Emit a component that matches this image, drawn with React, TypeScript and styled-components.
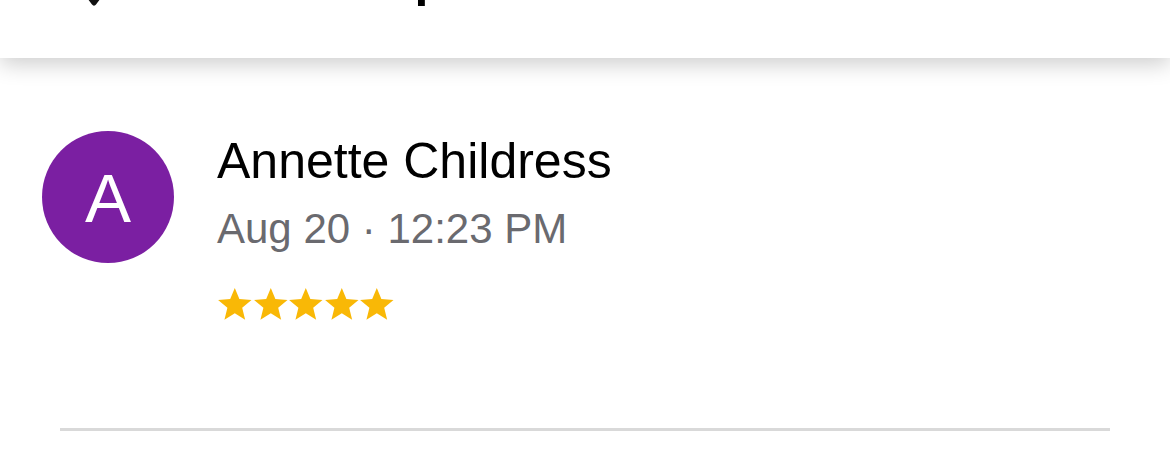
import React from "react";
import styled, { createGlobalStyle } from "styled-components";

const Global = createGlobalStyle`
  html, body { margin: 0; padding: 0; background: #ffffff; }
  body { font-family: "Liberation Sans", Arial, sans-serif; overflow: hidden; }
`;

const Page = styled.div`
  width: 1170px;
  height: 454px;
  display: flex;
  flex-direction: column;
  background: #ffffff;
`;

const Header = styled.header`
  position: relative;
  z-index: 1;
  height: 58px;
  flex: none;
  background: #ffffff;
  box-shadow: 0 6px 22px rgba(0, 0, 0, 0.2);
  overflow: hidden;
`;

const HeaderRow = styled.div`
  display: flex;
  align-items: flex-start;
  height: 60px;
  margin-top: -51px;
  padding-left: 78px;
  gap: 210px;
`;

const BackIcon = styled.svg`
  flex: none;
  margin-top: 32px;
`;

const Title = styled.div`
  font-size: 50px;
  line-height: 60px;
  font-weight: 700;
  color: #000;
  white-space: nowrap;
`;

const Content = styled.main`
  display: flex;
  flex-direction: column;
  padding-top: 73px;
`;

const Review = styled.section`
  display: flex;
  align-items: flex-start;
  gap: 43px;
  padding-left: 42px;
`;

const Avatar = styled.div<{ $color: string }>`
  width: 132px;
  height: 132px;
  flex: none;
  border-radius: 50%;
  background: ${(p) => p.$color};
  color: #ffffff;
  display: flex;
  align-items: center;
  justify-content: center;
  font-size: 69px;
  line-height: 1;
  padding-top: 2px;
  box-sizing: border-box;
`;

const Body = styled.div`
  display: flex;
  flex-direction: column;
  align-items: flex-start;
`;

const Name = styled.div`
  font-size: 50px;
  line-height: 60px;
  color: #000000;
`;

const Meta = styled.div`
  margin-top: 13px;
  font-size: 42px;
  line-height: 50px;
  color: #6a6a6f;
`;

const Stars = styled.div`
  margin-top: 33px;
  display: flex;
`;

const Divider = styled.hr`
  margin: 107px 60px 0;
  border: none;
  height: 3px;
  background: #d9d9d9;
`;

const Star = () => (
  <svg width="35.6" height="34" viewBox="0 0 24 23">
    <path
      d="M12 0.6l3.1 7.6 8.2 0.6-6.3 5.3 2 8-7-4.4-7 4.4 2-8L0.7 8.8l8.2-0.6z"
      fill="#F9B806"
    />
  </svg>
);

export default function App() {
  return (
    <Page>
      <Global />
      <Header>
        <HeaderRow>
          <BackIcon width="32" height="28" viewBox="0 0 32 28">
            <polyline
              points="4,6 16,22 28,6"
              fill="none"
              stroke="#111"
              strokeWidth="5"
              strokeLinecap="round"
              strokeLinejoin="round"
            />
          </BackIcon>
          <Title>Shop reviews</Title>
        </HeaderRow>
      </Header>
      <Content>
        <Review>
          <Avatar $color="#7B1FA2">A</Avatar>
          <Body>
            <Name>Annette Childress</Name>
            <Meta>Aug 20 · 12:23 PM</Meta>
            <Stars>
              {[0, 1, 2, 3, 4].map((i) => (
                <Star key={i} />
              ))}
            </Stars>
          </Body>
        </Review>
        <Divider />
      </Content>
    </Page>
  );
}
